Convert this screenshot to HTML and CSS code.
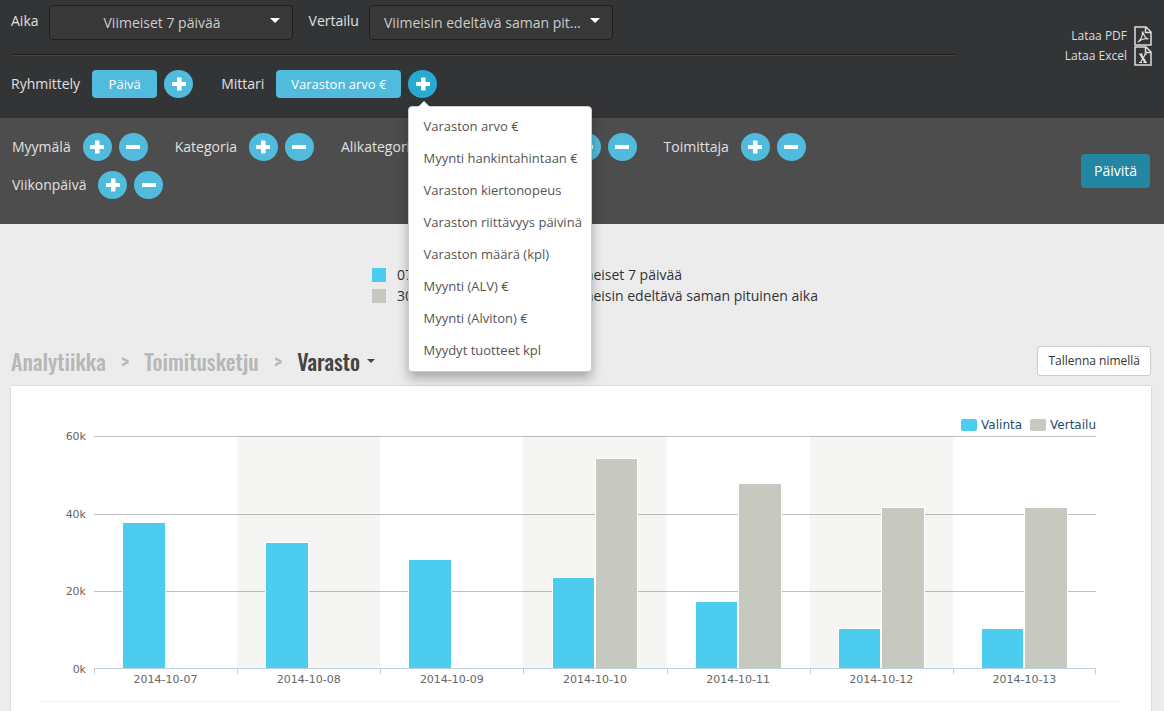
FILE: index.html
```html
<!DOCTYPE html>
<html lang="fi">
<head>
<meta charset="utf-8">
<title>Varasto</title>
<link rel="stylesheet" href="styles.css">
</head>
<body>
<svg class="sprite" aria-hidden="true">
  <symbol id="plus" viewBox="0 0 14 14"><path d="M5 0.5h4.500v4.500h4.500v4h-4.500v4.500h-4.500v-4.500h-5v-4h5z"/></symbol>
  <symbol id="minus" viewBox="0 0 14 14"><path d="M0 5h14v4h-14z"/></symbol>
  <symbol id="caret" viewBox="0 0 10 5"><path d="M0 0h10l-5 5z"/></symbol>
</svg>

<header class="topbar">
  <div class="settings">
    <div class="row row-period">
      <label for="period">Aika</label>
      <div class="select">
        <select id="period"><option>Viimeiset 7 päivää</option></select>
        <svg class="select-caret"><use href="#caret"/></svg>
      </div>
      <label for="compare">Vertailu</label>
      <div class="select">
        <select id="compare"><option>Viimeisin edeltävä saman pit...</option></select>
        <svg class="select-caret"><use href="#caret"/></svg>
      </div>
    </div>
    <div class="row row-group">
      <div class="group">
        <span class="name">Ryhmittely</span>
        <button class="chip" type="button">Päivä</button>
        <button class="round" type="button" aria-label="Lisää ryhmittely"><svg><use href="#plus"/></svg></button>
      </div>
      <div class="group">
        <span class="name">Mittari</span>
        <button class="chip" type="button">Varaston arvo €</button>
        <div class="dropdown">
          <button class="round active" type="button" aria-label="Lisää mittari" aria-expanded="true"><svg><use href="#plus"/></svg></button>
          <ul class="menu">
            <li><a href="#">Varaston arvo €</a></li>
            <li><a href="#">Myynti hankintahintaan €</a></li>
            <li><a href="#">Varaston kiertonopeus</a></li>
            <li><a href="#">Varaston riittävyys päivinä</a></li>
            <li><a href="#">Varaston määrä (kpl)</a></li>
            <li><a href="#">Myynti (ALV) €</a></li>
            <li><a href="#">Myynti (Alviton) €</a></li>
            <li><a href="#">Myydyt tuotteet kpl</a></li>
          </ul>
        </div>
      </div>
    </div>
  </div>
  <div class="exports">
    <a href="#">Lataa PDF
      <svg class="file" viewBox="0 0 18 20"><path d="M1 1h11l5 5v13h-16zM11.500 1v5.500h5.500"/><path class="thin" d="M4 16c2-1 5-6 4.500-10.500c2 5 3 7 6 7.500c-3-1-7 0-10.500 3z"/></svg>
    </a>
    <a href="#">Lataa Excel
      <svg class="file" viewBox="0 0 18 20"><path d="M1 1h11l5 5v13h-16zM11.500 1v5.500h5.500"/><path class="thick" d="M6.500 8l5 8.500"/><path class="thin" d="M11.500 8l-5 8.500M5 8h3.500M10 8h3M5 16.500h3M9.500 16.500h3.500"/></svg>
    </a>
  </div>
</header>

<section class="filters">
  <div class="filter-list">
    <div class="filter"><span>Myymälä</span>
      <button class="round" type="button" aria-label="Lisää myymälä"><svg><use href="#plus"/></svg></button>
      <button class="round" type="button" aria-label="Poista myymälä"><svg><use href="#minus"/></svg></button></div>
    <div class="filter"><span>Kategoria</span>
      <button class="round" type="button" aria-label="Lisää kategoria"><svg><use href="#plus"/></svg></button>
      <button class="round" type="button" aria-label="Poista kategoria"><svg><use href="#minus"/></svg></button></div>
    <div class="filter"><span>Alikategoria</span>
      <button class="round" type="button" aria-label="Lisää alikategoria"><svg><use href="#plus"/></svg></button>
      <button class="round" type="button" aria-label="Poista alikategoria"><svg><use href="#minus"/></svg></button></div>
    <div class="filter"><span>Tuote</span>
      <button class="round" type="button" aria-label="Lisää tuote"><svg><use href="#plus"/></svg></button>
      <button class="round" type="button" aria-label="Poista tuote"><svg><use href="#minus"/></svg></button></div>
    <div class="filter"><span>Toimittaja</span>
      <button class="round" type="button" aria-label="Lisää toimittaja"><svg><use href="#plus"/></svg></button>
      <button class="round" type="button" aria-label="Poista toimittaja"><svg><use href="#minus"/></svg></button></div>
    <div class="filter"><span>Viikonpäivä</span>
      <button class="round" type="button" aria-label="Lisää viikonpäivä"><svg><use href="#plus"/></svg></button>
      <button class="round" type="button" aria-label="Poista viikonpäivä"><svg><use href="#minus"/></svg></button></div>
  </div>
  <button class="update" type="button">Päivitä</button>
</section>

<main>
  <ul class="ranges">
    <li><i class="swatch blue"></i><span class="dates">07.10.2014 - 13.10.2014</span><span>Viimeiset 7 päivää</span></li>
    <li><i class="swatch gray"></i><span class="dates">30.09.2014 - 06.10.2014</span><span>Viimeisin edeltävä saman pituinen aika</span></li>
  </ul>

  <div class="heading">
    <nav class="crumbs">
      <a href="#">Analytiikka</a><span class="sep">&gt;</span><a href="#">Toimitusketju</a><span class="sep">&gt;</span><a class="current" href="#">Varasto <svg class="crumb-caret"><use href="#caret"/></svg></a>
    </nav>
    <button class="save" type="button">Tallenna nimellä</button>
  </div>

  <section class="card">
    <div class="legend">
      <span><i class="key blue"></i>Valinta</span>
      <span><i class="key gray"></i>Vertailu</span>
    </div>
    <div class="chart">
      <div class="y-axis"><span>60k</span><span>40k</span><span>20k</span><span>0k</span></div>
      <div class="plot">
        <div class="day"><i class="bar blue" style="height:63%"></i></div>
        <div class="day"><i class="bar blue" style="height:54.3%"></i></div>
        <div class="day"><i class="bar blue" style="height:47%"></i></div>
        <div class="day"><i class="bar blue" style="height:39.2%"></i><i class="bar gray" style="height:90.5%"></i></div>
        <div class="day"><i class="bar blue" style="height:28.9%"></i><i class="bar gray" style="height:79.7%"></i></div>
        <div class="day"><i class="bar blue" style="height:17.2%"></i><i class="bar gray" style="height:69.4%"></i></div>
        <div class="day"><i class="bar blue" style="height:17.2%"></i><i class="bar gray" style="height:69.4%"></i></div>
      </div>
      <div class="x-axis">
        <span>2014-10-07</span><span>2014-10-08</span><span>2014-10-09</span><span>2014-10-10</span><span>2014-10-11</span><span>2014-10-12</span><span>2014-10-13</span>
      </div>
    </div>
    <hr>
  </section>
</main>
</body>
</html>
```
FILE: styles.css
```css
* { box-sizing: border-box; }
body {
  margin: 0;
  background: #ececec;
  color: #333;
  font: 14px/20px "Open Sans", sans-serif;
}
button, select { font: inherit; }
button { cursor: pointer; }
a { color: inherit; text-decoration: none; }
ul { list-style: none; margin: 0; padding: 0; }
.sprite { display: none; }
.blue { background: #4ccdef; }
.gray { background: #c7c8bf; }

/* Top bar */
.topbar {
  display: flex;
  justify-content: space-between;
  padding: 5px 12px 20px 11px;
  background: #333436;
  color: #e0e0e0;
}
.settings { flex: 0 1 945px; }
.row { display: flex; }
.row-period {
  padding-bottom: 14px;
  border-bottom: 1px solid #222;
  box-shadow: 0 1px #404143;
}
.row-period label { margin: 6px 10px 0 0; }
.select { display: grid; width: 244px; margin-right: 16px; }
.select select {
  grid-area: 1 / 1;
  height: 35px;
  padding: 0 31px 0 14px;
  appearance: none;
  border: 1px solid #1f1f1f;
  border-radius: 4px;
  background: #383838;
  color: #ccc;
  text-align-last: center;
}
.select-caret {
  grid-area: 1 / 1;
  place-self: center end;
  width: 10px;
  height: 5px;
  margin: 0 13px 4px 0;
  fill: #fff;
  pointer-events: none;
}
.row-group { gap: 28px; padding-top: 15px; }
.group { display: flex; align-items: center; gap: 7px; }
.name { margin-right: 5px; }
.chip {
  height: 28px;
  min-width: 65px;
  padding: 0 15px;
  border: 0;
  border-radius: 4px;
  background: #50bbdd;
  color: #fff;
  font-size: 13px;
}
.round {
  display: grid;
  place-items: center;
  width: 29px;
  height: 28px;
  padding: 0 0 1px;
  border: 0;
  border-radius: 50%;
  background: #50bbdd;
}
.round svg { width: 14px; height: 14px; fill: #fff; }
.round.active { background: #29a9cf; }
.dropdown { position: relative; }
.menu {
  position: absolute;
  z-index: 5;
  top: 36px;
  left: 0;
  min-width: 184px;
  padding: 3px 0 5px;
  border: 1px solid #ccc;
  border-radius: 4px;
  background: #fff;
  box-shadow: 0 6px 12px rgba(0, 0, 0, .3);
  color: #555;
  font-size: 13px;
  white-space: nowrap;
}
.menu::before {
  content: "";
  position: absolute;
  top: -6px;
  left: 9px;
  border: solid transparent;
  border-width: 0 6px 6px;
  border-bottom-color: #fff;
}
.menu a { display: block; padding: 6px 8px 6px 14px; }
.exports {
  display: flex;
  flex-direction: column;
  align-items: flex-end;
  padding-top: 21px;
  color: #ddd;
  font-size: 12px;
}
.exports a { display: flex; gap: 7px; }
.file { width: 18px; height: 20px; fill: none; stroke: #ddd; stroke-width: 1.5; }
.file .thin { stroke-width: 1.2; }
.file .thick { stroke-width: 2.4; }

/* Filters */
.filters {
  display: flex;
  justify-content: space-between;
  align-items: center;
  padding: 15px 14px 25px 12px;
  background: #4d4d4d;
  color: #e0e0e0;
}
.filter-list { display: flex; flex-wrap: wrap; gap: 10px 27px; flex: 0 1 945px; }
.filter { display: flex; align-items: center; gap: 7px; }
.filter span { margin-right: 5px; }
.update {
  height: 34px;
  margin-top: 10px;
  padding: 0 13px;
  border: 0;
  border-radius: 4px;
  background: #2387a3;
  color: #fff;
}

/* Content */
main { padding: 0 13px 0 11px; }
.ranges { width: fit-content; margin: 0 auto; padding: 40px 0 40px 28px; }
.ranges li { display: flex; align-items: center; height: 21px; }
.swatch { width: 14px; height: 14px; margin-right: 11px; }
.dates { min-width: 168px; }
.heading { display: flex; justify-content: space-between; align-items: center; margin-bottom: 10px; }
.crumbs {
  display: flex;
  align-items: center;
  color: #b8b8b8;
  font: 500 22px/28px Oswald, "Liberation Sans Narrow", sans-serif;
}
.sep { margin: 0 15px; }
.current { display: flex; align-items: center; gap: 7px; color: #444; }
.crumb-caret { width: 8px; height: 4px; fill: #444; }
.save {
  height: 30px;
  padding: 0 10px;
  border: 1px solid #ccc;
  border-radius: 3px;
  background: #fff;
  color: #333;
  font-size: 12px;
}
.card {
  padding: 31px 30px 30px 41px;
  background: #fff;
  box-shadow: 0 0 2px rgba(0, 0, 0, .2);
}
.legend {
  display: flex;
  justify-content: flex-end;
  gap: 8px;
  padding-right: 25px;
  color: #274b6d;
  font: 12px/16px "DejaVu Sans", sans-serif;
}
.legend span { display: flex; align-items: center; gap: 4px; }
.key { width: 16px; height: 12px; border-radius: 2px; }
.chart {
  display: grid;
  grid-template: 233px 21px / 42px 1fr;
  padding-right: 25px;
  margin-top: 3px;
  color: #666;
  font: 11px/14px "DejaVu Sans", sans-serif;
}
.y-axis {
  display: flex;
  flex-direction: column;
  justify-content: space-between;
  align-items: flex-end;
  margin: -6px 0 -8px;
  padding-right: 8px;
}
.plot {
  display: flex;
  border-bottom: 1px solid #c0d0e0;
  background:
    linear-gradient(#c0c0c0, #c0c0c0) 0 0 / 100% 1px no-repeat,
    linear-gradient(#c0c0c0, #c0c0c0) 0 78px / 100% 1px no-repeat,
    linear-gradient(#c0c0c0, #c0c0c0) 0 155px / 100% 1px no-repeat;
}
.day { display: flex; align-items: flex-end; flex: 1; padding: 0 2.81%; }
.day:nth-child(even) { background: rgba(68, 68, 34, .05); }
.bar { width: 50%; border: 1px solid #fff; border-bottom: 0; }
.x-axis { grid-column: 2; display: flex; }
.x-axis span {
  flex: 1;
  padding-top: 4px;
  background: linear-gradient(#c0d0e0, #c0d0e0) 0 0 / 1px 5px no-repeat;
  text-align: center;
}
.x-axis span:last-child {
  background:
    linear-gradient(#c0d0e0, #c0d0e0) 0 0 / 1px 5px no-repeat,
    linear-gradient(#c0d0e0, #c0d0e0) 100% 0 / 1px 5px no-repeat;
}
hr { height: 1px; margin: 11px 0 0 -11px; border: 0; background: #eee; }
```
